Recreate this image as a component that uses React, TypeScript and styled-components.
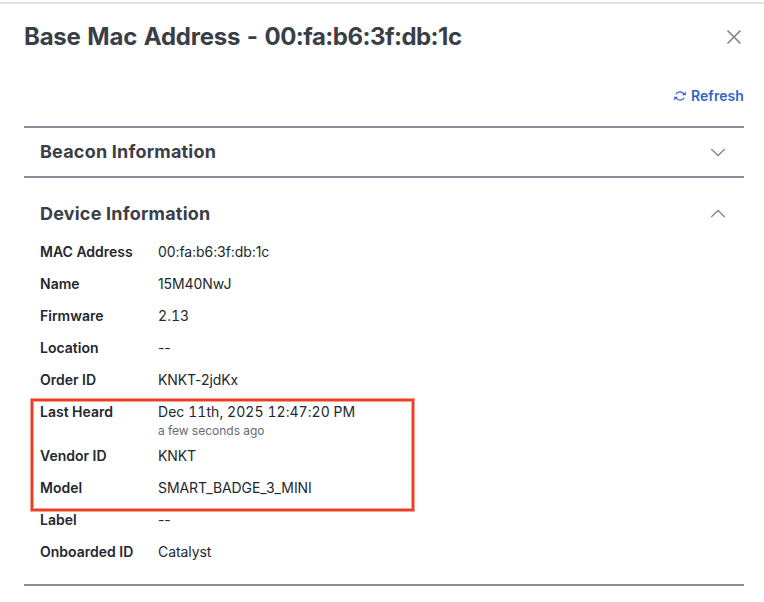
import React from "react";
import styled, { createGlobalStyle } from "styled-components";

const details = [
  { label: "MAC Address", value: "00:fa:b6:3f:db:1c" },
  { label: "Name", value: "15M40NwJ" },
  { label: "Firmware", value: "2.13", tabular: true },
  { label: "Location", value: "--" },
  { label: "Order ID", value: "KNKT-2jdKx" },
  {
    label: "Last Heard",
    value: "Dec 11th, 2025 12:47:20 PM",
    note: "a few seconds ago",
    tabular: true,
  },
  { label: "Vendor ID", value: "KNKT" },
  { label: "Model", value: "SMART_BADGE_3_MINI" },
  { label: "Label", value: "--" },
  { label: "Onboarded ID", value: "Catalyst" },
];

const App = () => {
  return (
    <>
      <GlobalStyle />
      <Panel>
        <Header>
          <Title>
            Base Mac Address - <Mac>00:fa:b6:3f:db:1c</Mac>
          </Title>
          <CloseButton aria-label="Close">
            <svg width="14" height="14" viewBox="0 0 14 14">
              <path d="M1 1l12 12M13 1L1 13" />
            </svg>
          </CloseButton>
        </Header>
        <Toolbar>
          <RefreshButton>
            <svg width="12" height="12" viewBox="0 0 12 12">
              <path d="M1.9 4.3A4.5 4.5 0 0 1 9.8 4M10.1 7.7A4.5 4.5 0 0 1 2.2 8" />
              <path className="arrow" d="M11.8 1.5v3.7H8.1zM.2 10.5V6.8h3.7z" />
            </svg>
            Refresh
          </RefreshButton>
        </Toolbar>
        <Section>
          <SectionHeader>
            <SectionTitle>Beacon Information</SectionTitle>
            <Chevron />
          </SectionHeader>
        </Section>
        <Section $open>
          <SectionHeader $open>
            <SectionTitle>Device Information</SectionTitle>
            <Chevron up />
          </SectionHeader>
          <Details>
            {details.map(({ label, value, note, tabular }) => (
              <Row key={label}>
                <Label>{label}</Label>
                <Value $tabular={tabular}>
                  {value}
                  {note && <Note>{note}</Note>}
                </Value>
              </Row>
            ))}
            <Highlight />
          </Details>
        </Section>
      </Panel>
    </>
  );
};

const Chevron = ({ up }: { up?: boolean }) => (
  <ChevronIcon width="16" height="10" viewBox="0 0 16 10">
    <path d={up ? "M1.2 8L8 1.5 14.8 8" : "M1.2 2L8 8.5 14.8 2"} />
  </ChevronIcon>
);

const GlobalStyle = createGlobalStyle`
  * {
    box-sizing: border-box;
  }

  body {
    margin: 0;
    background: #fff;
    color: #23282e;
    font-family: Inter, sans-serif;
    font-size: 14px;
  }
`;

const Panel = styled.main`
  height: 600px;
  margin-top: 2px;
  overflow: hidden;
  padding: 0 20px 0 24px;
  border-top: 2px solid #e1e1e2;
`;

const Header = styled.header`
  display: flex;
  align-items: center;
  justify-content: space-between;
  height: 66px;
`;

const Title = styled.h1`
  margin: 0 0 2px;
  color: #3a3e47;
  font-size: 24px;
  font-weight: 650;
  letter-spacing: -0.22px;
  word-spacing: 1.2px;
  white-space: nowrap;
`;

const Mac = styled.span`
  letter-spacing: -0.53px;
`;

const CloseButton = styled.button`
  display: flex;
  margin-right: 3px;
  padding: 0;
  border: 0;
  background: none;

  path {
    fill: none;
    stroke: #7e868e;
    stroke-width: 1.7;
    stroke-linecap: round;
  }
`;

const Toolbar = styled.div`
  display: flex;
  align-items: center;
  justify-content: flex-end;
  height: 52px;
  margin-bottom: 4px;
`;

const RefreshButton = styled.button`
  display: flex;
  align-items: center;
  gap: 5px;
  padding: 0;
  border: 0;
  background: none;
  color: #3163c5;
  font-family: inherit;
  font-size: 14px;
  font-weight: 600;
  line-height: 20px;
  letter-spacing: 0.08px;

  path {
    fill: none;
    stroke: #3163c5;
    stroke-width: 1.2;
  }

  .arrow {
    fill: #3163c5;
    stroke: none;
  }
`;

const Section = styled.section<{ $open?: boolean }>`
  height: ${(p) => (p.$open ? "410px" : "50px")};
  border-top: 2px solid #8a8e9a;
  border-bottom: ${(p) => (p.$open ? "2px solid #8a8e9a" : "0")};
`;

const SectionHeader = styled.div<{ $open?: boolean }>`
  display: flex;
  align-items: center;
  justify-content: space-between;
  height: 48px;
  margin-top: ${(p) => (p.$open ? "12px" : "0")};
  padding: 0 18px 0 16px;
`;

const SectionTitle = styled.h2`
  margin: 0;
  color: #3a3e47;
  font-size: 18px;
  font-weight: 650;
  line-height: 24px;
  letter-spacing: 0.2px;
`;

const ChevronIcon = styled.svg`
  fill: none;
  stroke: #7e868e;
  stroke-width: 1.3;
`;

const Details = styled.dl`
  position: relative;
  display: grid;
  gap: 12px;
  margin: 4px 0 0;
  padding: 0 16px;
`;

const Row = styled.div`
  display: grid;
  grid-template-columns: 118px 1fr;
  line-height: 20px;
`;

const Label = styled.dt`
  font-weight: 600;
`;

const Value = styled.dd<{ $tabular?: boolean }>`
  margin: 0;
  font-variant-numeric: ${(p) => (p.$tabular ? "tabular-nums" : "normal")};
  letter-spacing: ${(p) => (p.$tabular ? "0.05px" : "-0.08px")};
`;

const Note = styled.div`
  height: 12px;
  color: #656c75;
  font-size: 12px;
  line-height: 18px;
  letter-spacing: 0;
`;

const Highlight = styled.div`
  position: absolute;
  top: 157px;
  left: 7px;
  width: 383px;
  height: 112px;
  border: 2px solid #ea4025;
  box-shadow: 0 0 0 1px rgba(234, 64, 37, 0.5),
    inset 0 0 0 1px rgba(234, 64, 37, 0.5);
`;

export default App;
